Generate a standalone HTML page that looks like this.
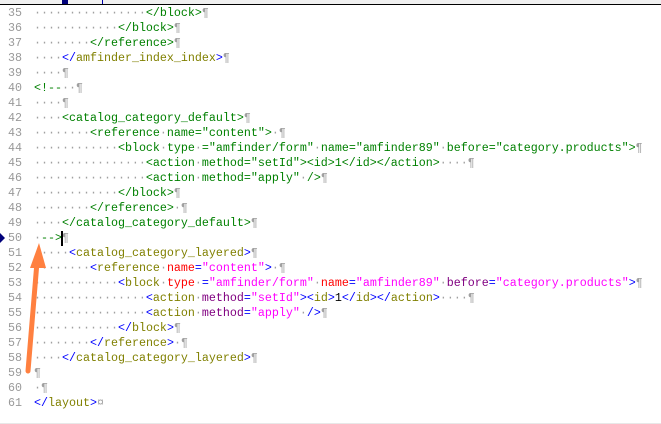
<!DOCTYPE html>
<html><head><meta charset="utf-8"><style>
body{margin:0;width:661px;height:424px;background:#fff;overflow:hidden;position:relative;font-family:"Liberation Mono",monospace;font-size:11.67px}
.top{position:absolute;left:0;top:0;width:661px;height:4px;background:#f0f0f0;border-bottom:1px solid #000}
.r{position:absolute;left:0;height:15px;line-height:15px;white-space:pre}
.n{position:absolute;left:8px;color:#999}
.c{position:absolute;left:34px}
.d,.p{color:#a0a0a0}
.g{color:#008000}
.b{color:#0000ff}
.t{color:#808000}
.a{color:#ff0000}
.m{color:#800080}
.v{color:#ff00ff}
.k{color:#000}
</style></head><body>
<div class="top"></div>
<div style="position:absolute;left:102px;top:0;width:1px;height:4px;background:#00a"></div>
<div style="position:absolute;left:62px;top:0;width:6px;height:4px;background:#00007a"></div>

<div class="r" style="top:6px"><span class="n">35</span><span class="c g"><span class="d">················</span>&lt;/block&gt;<span class="p">¶</span></span></div>
<div class="r" style="top:21px"><span class="n">36</span><span class="c g"><span class="d">············</span>&lt;/block&gt;<span class="p">¶</span></span></div>
<div class="r" style="top:36px"><span class="n">37</span><span class="c g"><span class="d">········</span>&lt;/reference&gt;<span class="p">¶</span></span></div>
<div class="r" style="top:51px"><span class="n">38</span><span class="c"><span class="d">····</span><span class="b">&lt;/</span><span class="t">amfinder_index_index</span><span class="b">&gt;</span><span class="p">¶</span></span></div>
<div class="r" style="top:66px"><span class="n">39</span><span class="c"><span class="d">····</span><span class="p">¶</span></span></div>
<div class="r" style="top:81px"><span class="n">40</span><span class="c g">&lt;!--<span class="d">··</span><span class="p">¶</span></span></div>
<div class="r" style="top:96px"><span class="n">41</span><span class="c g"><span class="d">····</span><span class="p">¶</span></span></div>
<div class="r" style="top:111px"><span class="n">42</span><span class="c g"><span class="d">····</span>&lt;catalog_category_default&gt;<span class="p">¶</span></span></div>
<div class="r" style="top:126px"><span class="n">43</span><span class="c g"><span class="d">········</span>&lt;reference<span class="d">·</span>name="content"&gt;<span class="d">·</span><span class="p">¶</span></span></div>
<div class="r" style="top:141px"><span class="n">44</span><span class="c g"><span class="d">············</span>&lt;block<span class="d">·</span>type<span class="d">·</span>="amfinder/form"<span class="d">·</span>name="amfinder89"<span class="d">·</span>before="category.products"&gt;<span class="p">¶</span></span></div>
<div class="r" style="top:156px"><span class="n">45</span><span class="c g"><span class="d">················</span>&lt;action<span class="d">·</span>method="setId"&gt;&lt;id&gt;1&lt;/id&gt;&lt;/action&gt;<span class="d">····</span><span class="p">¶</span></span></div>
<div class="r" style="top:171px"><span class="n">46</span><span class="c g"><span class="d">················</span>&lt;action<span class="d">·</span>method="apply"<span class="d">·</span>/&gt;<span class="p">¶</span></span></div>
<div class="r" style="top:186px"><span class="n">47</span><span class="c g"><span class="d">············</span>&lt;/block&gt;<span class="p">¶</span></span></div>
<div class="r" style="top:201px"><span class="n">48</span><span class="c g"><span class="d">········</span>&lt;/reference&gt;<span class="d">·</span><span class="p">¶</span></span></div>
<div class="r" style="top:216px"><span class="n">49</span><span class="c g"><span class="d">····</span>&lt;/catalog_category_default&gt;<span class="p">¶</span></span></div>
<div class="r" style="top:231px"><span class="n">50</span><span class="c g"><span class="d">·</span>--&gt;<span class="p">¶</span></span></div>
<div class="r" style="top:246px"><span class="n">51</span><span class="c"><span class="d">·····</span><span class="b">&lt;</span><span class="t">catalog_category_layered</span><span class="b">&gt;</span><span class="p">¶</span></span></div>
<div class="r" style="top:261px"><span class="n">52</span><span class="c"><span class="d">········</span><span class="b">&lt;</span><span class="t">reference</span><span class="d">·</span><span class="a">name</span><span class="b">=</span><span class="v">"content"</span><span class="b">&gt;</span><span class="d">·</span><span class="p">¶</span></span></div>
<div class="r" style="top:276px"><span class="n">53</span><span class="c"><span class="d">············</span><span class="b">&lt;</span><span class="t">block</span><span class="d">·</span><span class="a">type</span><span class="d">·</span><span class="b">=</span><span class="v">"amfinder/form"</span><span class="d">·</span><span class="a">name</span><span class="b">=</span><span class="v">"amfinder89"</span><span class="d">·</span><span class="m">before</span><span class="b">=</span><span class="v">"category.products"</span><span class="b">&gt;</span><span class="p">¶</span></span></div>
<div class="r" style="top:291px"><span class="n">54</span><span class="c"><span class="d">················</span><span class="b">&lt;</span><span class="t">action</span><span class="d">·</span><span class="m">method</span><span class="b">=</span><span class="v">"setId"</span><span class="b">&gt;&lt;</span><span class="t">id</span><span class="b">&gt;</span><span class="k">1</span><span class="b">&lt;/</span><span class="t">id</span><span class="b">&gt;&lt;/</span><span class="t">action</span><span class="b">&gt;</span><span class="d">····</span><span class="p">¶</span></span></div>
<div class="r" style="top:306px"><span class="n">55</span><span class="c"><span class="d">················</span><span class="b">&lt;</span><span class="t">action</span><span class="d">·</span><span class="m">method</span><span class="b">=</span><span class="v">"apply"</span><span class="d">·</span><span class="b">/&gt;</span><span class="p">¶</span></span></div>
<div class="r" style="top:321px"><span class="n">56</span><span class="c"><span class="d">············</span><span class="b">&lt;/</span><span class="t">block</span><span class="b">&gt;</span><span class="p">¶</span></span></div>
<div class="r" style="top:336px"><span class="n">57</span><span class="c"><span class="d">········</span><span class="b">&lt;/</span><span class="t">reference</span><span class="b">&gt;</span><span class="d">·</span><span class="p">¶</span></span></div>
<div class="r" style="top:351px"><span class="n">58</span><span class="c"><span class="d">····</span><span class="b">&lt;/</span><span class="t">catalog_category_layered</span><span class="b">&gt;</span><span class="p">¶</span></span></div>
<div class="r" style="top:366px"><span class="n">59</span><span class="c"><span class="p">¶</span></span></div>
<div class="r" style="top:381px"><span class="n">60</span><span class="c"><span class="d">·</span><span class="p">¶</span></span></div>
<div class="r" style="top:396px"><span class="n">61</span><span class="c"><span class="b">&lt;/</span><span class="t">layout</span><span class="b">&gt;</span><span class="p">¤</span></span></div>

<div style="position:absolute;left:61px;top:231px;width:2px;height:15px;background:#000"></div>
<div style="position:absolute;left:0;top:233px;width:0;height:0;border-top:5px solid transparent;border-bottom:5px solid transparent;border-left:5px solid #00007a"></div>
<div style="position:absolute;left:0;bottom:0;width:661px;height:1px;background:#e8e8e8"></div>
<svg style="position:absolute;left:0;top:0" width="661" height="424">
<line x1="28" y1="371" x2="37" y2="262" stroke="#ff8040" stroke-width="5" stroke-linecap="round"/>
<polygon points="39,243 30,268 46,268" fill="#ff8040"/>
</svg>
</body></html>
